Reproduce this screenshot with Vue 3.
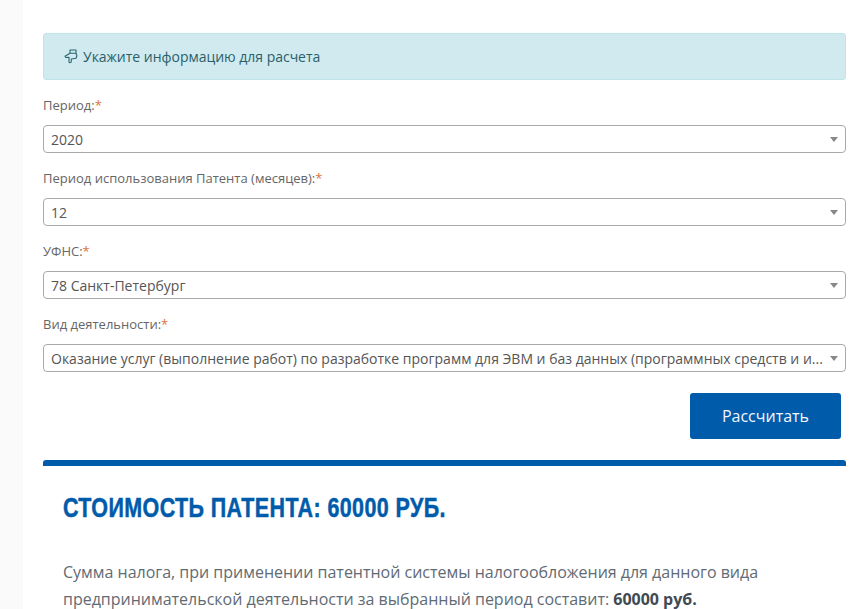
<script setup>
const fields = [
  { label: 'Период:', value: '2020' },
  { label: 'Период использования Патента (месяцев):', value: '12' },
  { label: 'УФНС:', value: '78 Санкт-Петербург' },
  { label: 'Вид деятельности:', value: 'Оказание услуг (выполнение работ) по разработке программ для ЭВМ и баз данных (программных средств и и...' }
]
</script>

<template>
  <div class="page">
    <aside class="strip"></aside>
    <main class="content">
      <div class="alert">
        <svg class="hand" viewBox="0 0 14 15" width="14" height="15" fill="none" stroke="#2a6571" stroke-width="1.1" stroke-linejoin="round">
          <path d="M6 1h6v3.2H6z" />
          <path d="M6 4.2 1 7.3l.8 1.2L5 8.2v4.6q0 1 1.1 1t1.2-1V10l4.7-.8.9-2.5-1-2.5" />
        </svg>
        <span>Укажите информацию для расчета</span>
      </div>
      <form class="form" @submit.prevent>
        <div v-for="f in fields" :key="f.label" class="field">
          <label class="label">{{ f.label }}<span class="req">*</span></label>
          <div class="select">
            <span class="value">{{ f.value }}</span>
            <i class="caret"></i>
          </div>
        </div>
        <div class="actions">
          <button class="btn" type="button">Рассчитать</button>
        </div>
      </form>
      <section class="result">
        <h2 class="title">Стоимость патента: 60000 руб.</h2>
        <p class="text">Сумма налога, при применении патентной системы налогообложения для данного вида предпринимательской деятельности за выбранный период составит: <b>60000 руб.</b></p>
      </section>
    </main>
  </div>
</template>

<style>
html, body { margin: 0; background: #fff; overflow: hidden; }
</style>

<style scoped>
.page {
  display: flex;
  width: 861px;
  height: 609px;
  overflow: hidden;
  font-family: "Open Sans", "Noto Sans", sans-serif;
  color: #555;
  background: #fff;
}
.strip { width: 23px; flex: none; background: #fafafa; }
.content { width: 803px; margin-left: 20px; padding-top: 33px; }
.alert {
  display: flex;
  align-items: center;
  gap: 5px;
  height: 47px;
  box-sizing: border-box;
  padding: 0 20px;
  background: #d0eaef;
  border: 1px solid #bee5eb;
  border-radius: 3px;
  color: #2a5f6a;
  font-size: 14px;
  letter-spacing: -0.02px;
}
.form { display: flex; flex-direction: column; }
.field { display: flex; flex-direction: column; }
.label {
  height: 45px;
  box-sizing: border-box;
  padding-top: 16px;
  font-size: 13px;
  line-height: 18px;
  color: #666;
}
.req { color: #e0713f; font-size: 13px; }
.select {
  display: flex;
  align-items: center;
  height: 28px;
  box-sizing: border-box;
  padding: 0 7px;
  border: 1px solid #aaa;
  border-radius: 4px;
  font-size: 14px;
  color: #555;
  background: #fff;
}
.value { flex: 1; min-width: 0; white-space: nowrap; }
.caret {
  flex: none;
  margin-left: 8px;
  width: 0;
  height: 0;
  border-left: 4px solid transparent;
  border-right: 4px solid transparent;
  border-top: 5px solid #888;
}
.actions { display: flex; justify-content: flex-end; padding: 21px 5px 21px 0; }
.btn {
  width: 151px;
  height: 46px;
  border: 0;
  border-radius: 3px;
  background: #005baa;
  color: #f2f6fb;
  font: 500 16px "Open Sans", sans-serif;
}
.result { border-top: 6px solid #005baa; border-radius: 3px 3px 0 0; padding: 0 20px; }
.title {
  margin: 25px 0 0;
  font-family: "Liberation Sans", sans-serif;
  font-size: 27px;
  line-height: 34px;
  font-weight: 700;
  text-transform: uppercase;
  letter-spacing: 0.5px;
  color: #005baa;
  -webkit-text-stroke: 0.5px #005baa;
  white-space: nowrap;
  transform: scaleX(0.795);
  transform-origin: left center;
}
.text {
  margin: 34px 0 0;
  font-size: 16px;
  line-height: 27px;
  color: #5f6b75;
  letter-spacing: -0.01px;
}
.text b { color: #3f4a54; }
</style>
